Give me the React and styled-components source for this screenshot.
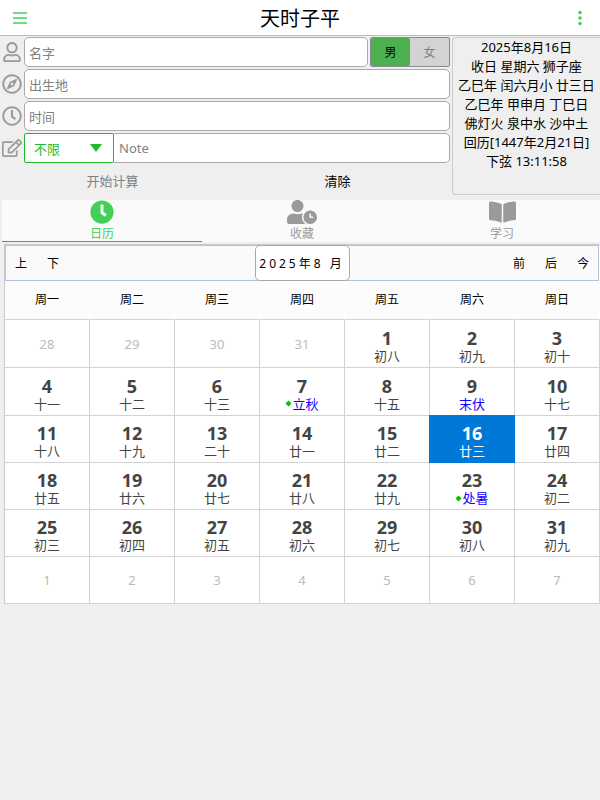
import React, { useState } from 'react'
import styled, { createGlobalStyle } from 'styled-components'
import { FaRegUser, FaRegCompass, FaRegClock, FaRegEdit, FaClock, FaUserClock, FaBookOpen } from 'react-icons/fa'

const weekdays = ['周一', '周二', '周三', '周四', '周五', '周六', '周日']

// [day, lunar day, kind]
const weeks = [
    [['28'], ['29'], ['30'], ['31'], ['1', '初八'], ['2', '初九'], ['3', '初十']],
    [['4', '十一'], ['5', '十二'], ['6', '十三'], ['7', '立秋', 'term'], ['8', '十五'], ['9', '末伏', 'fest'], ['10', '十七']],
    [['11', '十八'], ['12', '十九'], ['13', '二十'], ['14', '廿一'], ['15', '廿二'], ['16', '廿三'], ['17', '廿四']],
    [['18', '廿五'], ['19', '廿六'], ['20', '廿七'], ['21', '廿八'], ['22', '廿九'], ['23', '处暑', 'term'], ['24', '初二']],
    [['25', '初三'], ['26', '初四'], ['27', '初五'], ['28', '初六'], ['29', '初七'], ['30', '初八'], ['31', '初九']],
    [['1'], ['2'], ['3'], ['4'], ['5'], ['6'], ['7']],
]

const info = [
    '2025年8月16日',
    '收日 星期六 狮子座',
    '乙巳年 闰六月小 廿三日',
    '乙巳年 甲申月 丁巳日',
    '佛灯火 泉中水 沙中土',
    '回历[1447年2月21日]',
    '下弦 13:11:58',
]

const tabs = [
    { id: 'calendar', label: '日历', Icon: FaClock, width: 24 },
    { id: 'saved', label: '收藏', Icon: FaUserClock, width: 30 },
    { id: 'study', label: '学习', Icon: FaBookOpen, width: 27 },
]

function Header() {
    return (
        <HeaderStyled>
            <IconButton aria-label="菜单">
                <svg width="16" height="14" viewBox="0 0 16 14" stroke="#6edb80" strokeWidth="2">
                    <path d="M1 2h14M1 7h14M1 12h14" />
                </svg>
            </IconButton>
            <h1>天时子平</h1>
            <IconButton aria-label="更多">
                <svg width="4" height="16" viewBox="0 0 4 16" fill="#43d058">
                    <circle cx="2" cy="2.5" r="1.8" />
                    <circle cx="2" cy="8" r="1.8" />
                    <circle cx="2" cy="13.5" r="1.8" />
                </svg>
            </IconButton>
        </HeaderStyled>
    )
}

function BirthForm() {
    const [gender, setGender] = useState('male')

    return (
        <FormStyled onSubmit={(e) => e.preventDefault()}>
            <Row>
                <RowIcon htmlFor="name" aria-label="名字"><FaRegUser size={20} /></RowIcon>
                <TextInput id="name" placeholder="名字" />
                <Gender>
                    <GenderOption $active={gender === 'male'}>
                        <input type="radio" name="gender" checked={gender === 'male'} onChange={() => setGender('male')} />
                        男
                    </GenderOption>
                    <GenderOption $active={gender === 'female'}>
                        <input type="radio" name="gender" checked={gender === 'female'} onChange={() => setGender('female')} />
                        女
                    </GenderOption>
                </Gender>
            </Row>
            <Row>
                <RowIcon htmlFor="place" aria-label="出生地"><FaRegCompass size={20} /></RowIcon>
                <TextInput id="place" placeholder="出生地" />
            </Row>
            <Row>
                <RowIcon htmlFor="time" aria-label="时间"><FaRegClock size={20} /></RowIcon>
                <TextInput id="time" placeholder="时间" />
            </Row>
            <Row>
                <RowIcon htmlFor="note" aria-label="Note"><FaRegEdit size={20} /></RowIcon>
                <SelectBox>
                    <select aria-label="分类" defaultValue="不限">
                        <option>不限</option>
                    </select>
                    <svg width="12" height="8" viewBox="0 0 12 8" fill="#21ba2f"><path d="M0 0h12L6 8z" /></svg>
                </SelectBox>
                <TextInput id="note" placeholder="Note" $joined />
            </Row>
            <Actions>
                <ActionButton type="submit" disabled>开始计算</ActionButton>
                <ActionButton type="reset">清除</ActionButton>
            </Actions>
        </FormStyled>
    )
}

function Calendar() {
    return (
        <CalendarStyled>
            <Toolbar>
                <ToolGroup>
                    <ToolButton>上</ToolButton>
                    <ToolButton>下</ToolButton>
                </ToolGroup>
                <MonthButton>2025年8 月</MonthButton>
                <ToolGroup $end>
                    <ToolButton>前</ToolButton>
                    <ToolButton>后</ToolButton>
                    <ToolButton>今</ToolButton>
                </ToolGroup>
            </Toolbar>
            <Table>
                <thead>
                    <tr>{weekdays.map((d) => <th key={d} scope="col">{d}</th>)}</tr>
                </thead>
                <tbody>
                    {weeks.map((week, i) => (
                        <WeekRow key={i} $tall={i < 2}>
                            {week.map(([day, lunar, kind]) => (
                                <Day key={day} $muted={!lunar} $selected={i === 2 && day === '16'}>
                                    {lunar ? <>
                                        <b>{day}</b>
                                        <Lunar $marked={Boolean(kind)}>
                                            {kind === 'term' && (
                                                <svg width="7" height="13" viewBox="0 0 7 13" fill="#00c400"><path d="M3.5 3.5l3 3-3 3-3-3z" /></svg>
                                            )}
                                            {lunar}
                                        </Lunar>
                                    </> : day}
                                </Day>
                            ))}
                        </WeekRow>
                    ))}
                </tbody>
            </Table>
        </CalendarStyled>
    )
}

function App() {
    const [tab, setTab] = useState('calendar')

    return (
        <>
            <GlobalStyle />
            <Header />
            <Top>
                <BirthForm />
                <InfoPanel>
                    {info.map((line) => <p key={line}>{line}</p>)}
                </InfoPanel>
            </Top>
            <Tabs role="tablist">
                {tabs.map(({ id, label, Icon, width }) => (
                    <Tab key={id} role="tab" aria-selected={tab === id} $active={tab === id} $iconWidth={width} onClick={() => setTab(id)}>
                        <Icon />
                        <span>{label}</span>
                    </Tab>
                ))}
            </Tabs>
            <Calendar />
        </>
    )
}

const GlobalStyle = createGlobalStyle`
    * {
        box-sizing: border-box;
        margin: 0;
    }
    body {
        background: #efefef;
        color: #000;
    }
    body, button, input, select {
        font-family: 'Noto Sans', 'Noto Sans CJK SC', sans-serif;
        font-size: 13px;
    }
    button {
        padding: 0;
        border: 0;
        background: none;
        color: inherit;
    }
`

const HeaderStyled = styled.header`
    display: flex;
    align-items: center;
    justify-content: space-between;
    height: 36px;
    background: #fff;
    border-bottom: 1px solid #bbb;
    h1 {
        padding-top: 2px;
        font-size: 20px;
        font-weight: 400;
        line-height: 33px;
    }
`

const IconButton = styled.button`
    display: flex;
    align-items: center;
    justify-content: center;
    width: 40px;
    height: 35px;
`

const Top = styled.section`
    display: grid;
    grid-template-columns: 1fr 148px;
    gap: 2px;
    padding-top: 1px;
`

const FormStyled = styled.form`
    display: flex;
    flex-direction: column;
    gap: 2px;
`

const Row = styled.div`
    display: flex;
    height: 30px;
`

const RowIcon = styled.label`
    display: flex;
    flex: none;
    align-items: center;
    justify-content: center;
    width: 24px;
    color: #9a9a9a;
`

const TextInput = styled.input`
    flex: 1;
    min-width: 0;
    padding: ${(p) => (p.$joined ? '0 4px 0 5px' : '1px 4px 0')};
    background: #fff;
    border: 1px solid #a9a9a9;
    border-left-width: ${(p) => (p.$joined ? '0' : '1px')};
    border-radius: ${(p) => (p.$joined ? '0 5px 5px 0' : '5px')};
    outline: 0;
    &::placeholder {
        color: #808080;
        opacity: 1;
    }
`

const Gender = styled.div`
    display: flex;
    width: 80px;
    margin-left: 2px;
    border: 1px solid #8a8a94;
    border-radius: 2px;
    background: #d3d3d3;
`

const GenderOption = styled.label`
    display: flex;
    flex: 1;
    align-items: center;
    justify-content: center;
    border-radius: 2px;
    background: ${(p) => (p.$active ? '#4caf50' : 'transparent')};
    color: ${(p) => (p.$active ? '#000' : '#808080')};
    font-size: 12px;
    input {
        position: absolute;
        opacity: 0;
    }
`

const SelectBox = styled.div`
    position: relative;
    width: 90px;
    select {
        width: 100%;
        height: 100%;
        padding: 1px 9px 0;
        appearance: none;
        background: #fff;
        border: 1px solid #21ba2f;
        border-radius: 2px;
        color: #21ba2f;
    }
    svg {
        position: absolute;
        top: 11px;
        right: 12px;
        pointer-events: none;
    }
`

const Actions = styled.div`
    display: grid;
    grid-template-columns: 1fr 1fr;
    height: 35px;
`

const ActionButton = styled.button`
    height: 30px;
    &:disabled {
        color: #808080;
    }
`

const InfoPanel = styled.aside`
    height: 158px;
    border: 1px solid #ccc;
    border-right: 0;
    border-radius: 4px 0 0 4px;
    text-align: center;
    line-height: 19px;
    white-space: nowrap;
`

const Tabs = styled.div`
    display: flex;
    margin-left: 2px;
    background: #fafafa;
    overflow: hidden;
`

const Tab = styled.button`
    display: flex;
    flex: none;
    flex-direction: column;
    align-items: center;
    width: calc(100vw / 3);
    height: 42px;
    border-bottom: 1px solid ${(p) => (p.$active ? '#13a9c4' : 'transparent')};
    color: ${(p) => (p.$active ? '#43d058' : '#9a9a9a')};
    svg {
        flex: none;
        width: ${(p) => p.$iconWidth}px;
        height: 24px;
    }
    span {
        font-size: 12px;
        line-height: 19px;
    }
`

const CalendarStyled = styled.main`
    margin: 2px 0 0 4px;
    border-top: 1px solid #ccc;
    border-left: 1px solid #ccc;
    background: #fff;
`

const Toolbar = styled.div`
    display: grid;
    grid-template-columns: 1fr 95px 1fr;
    height: 36px;
    margin-right: 1px;
    border: 1px solid #b0c4de;
    background: #fafafa;
`

const ToolGroup = styled.div`
    display: flex;
    justify-content: ${(p) => (p.$end ? 'flex-end' : 'flex-start')};
    margin: 0 -1px;
`

const ToolButton = styled.button`
    width: 32px;
    font-size: 12px;
`

const MonthButton = styled.button`
    margin: -1px 0;
    background: #fff;
    border: 1px solid #a9a9a9;
    border-radius: 5px;
    letter-spacing: 3px;
    font-size: 12px;
    white-space: nowrap;
`

const Table = styled.table`
    width: 100%;
    table-layout: fixed;
    border-collapse: separate;
    border-spacing: 0;
    th {
        height: 39px;
        padding: 0 0 2px;
        background: #fcfcfc;
        border-right: 1px solid #fff;
        border-bottom: 1px solid #d3d3d3;
        font-size: 12px;
        font-weight: 400;
    }
`

const WeekRow = styled.tr`
    height: ${(p) => (p.$tall ? '48px' : '47px')};
`

const Day = styled.td`
    padding: ${(p) => (p.$muted ? '0' : '6px 0 0')};
    border-right: 1px solid ${(p) => (p.$selected ? '#0078d7' : '#d3d3d3')};
    border-bottom: 1px solid ${(p) => (p.$selected ? '#0078d7' : '#d3d3d3')};
    background: ${(p) => (p.$selected ? '#0078d7' : '#fff')};
    box-shadow: ${(p) => (p.$selected ? '-1px 0 #0078d7, 0 -1px #0078d7, -1px -1px #0078d7' : 'none')};
    color: ${(p) => (p.$selected ? '#fff' : p.$muted ? '#bbb' : '#444')};
    text-align: center;
    line-height: 18px;
    b {
        display: block;
        font-size: 18px;
    }
`

const Lunar = styled.span`
    display: flex;
    align-items: center;
    justify-content: center;
    color: ${(p) => (p.$marked ? '#1400ff' : 'inherit')};
`

export default App
